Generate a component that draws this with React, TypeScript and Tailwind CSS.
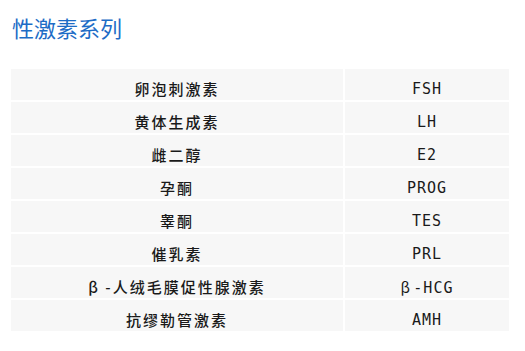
import React from "react";

const rows: [string, string][] = [
  ["卵泡刺激素", "FSH"],
  ["黄体生成素", "LH"],
  ["雌二醇", "E2"],
  ["孕酮", "PROG"],
  ["睾酮", "TES"],
  ["催乳素", "PRL"],
  ["β -人绒毛膜促性腺激素", "β -HCG"],
  ["抗缪勒管激素", "AMH"],
];

function Abbr({ text }: { text: string }) {
  if (text.startsWith("β")) {
    return (
      <>
        <span className="font-['Noto_Sans_CJK_SC',sans-serif] tracking-normal">β </span>
        {text.slice(2)}
      </>
    );
  }
  return <>{text}</>;
}

export default function App() {
  return (
    <div className="w-[525px] h-[351px] bg-white overflow-hidden font-['Noto_Sans_CJK_SC',sans-serif]">
      <h1 className="pl-[12px] pt-[12px] h-[69px] text-[22px] leading-[30px] text-[#1d6cc6] font-normal">
        性激素系列
      </h1>
      <div className="ml-[11px] grid grid-cols-[332px_164px] gap-[2px]">
        {rows.map(([name, abbr]) => (
          <React.Fragment key={name}>
            <div className="h-[31px] bg-[#f7f7f7] pt-[10px] text-center text-[15px] leading-[20px] tracking-[2px] font-medium text-[#1a1a1a]">
              {name}
            </div>
            <div className="h-[31px] bg-[#f7f7f7] pt-[10px] text-center text-[15px] leading-[20px] tracking-[1px] text-[#1a1a1a] font-['DejaVu_Sans_Mono','Noto_Sans_CJK_SC',monospace]">
              <Abbr text={abbr} />
            </div>
          </React.Fragment>
        ))}
      </div>
    </div>
  );
}
